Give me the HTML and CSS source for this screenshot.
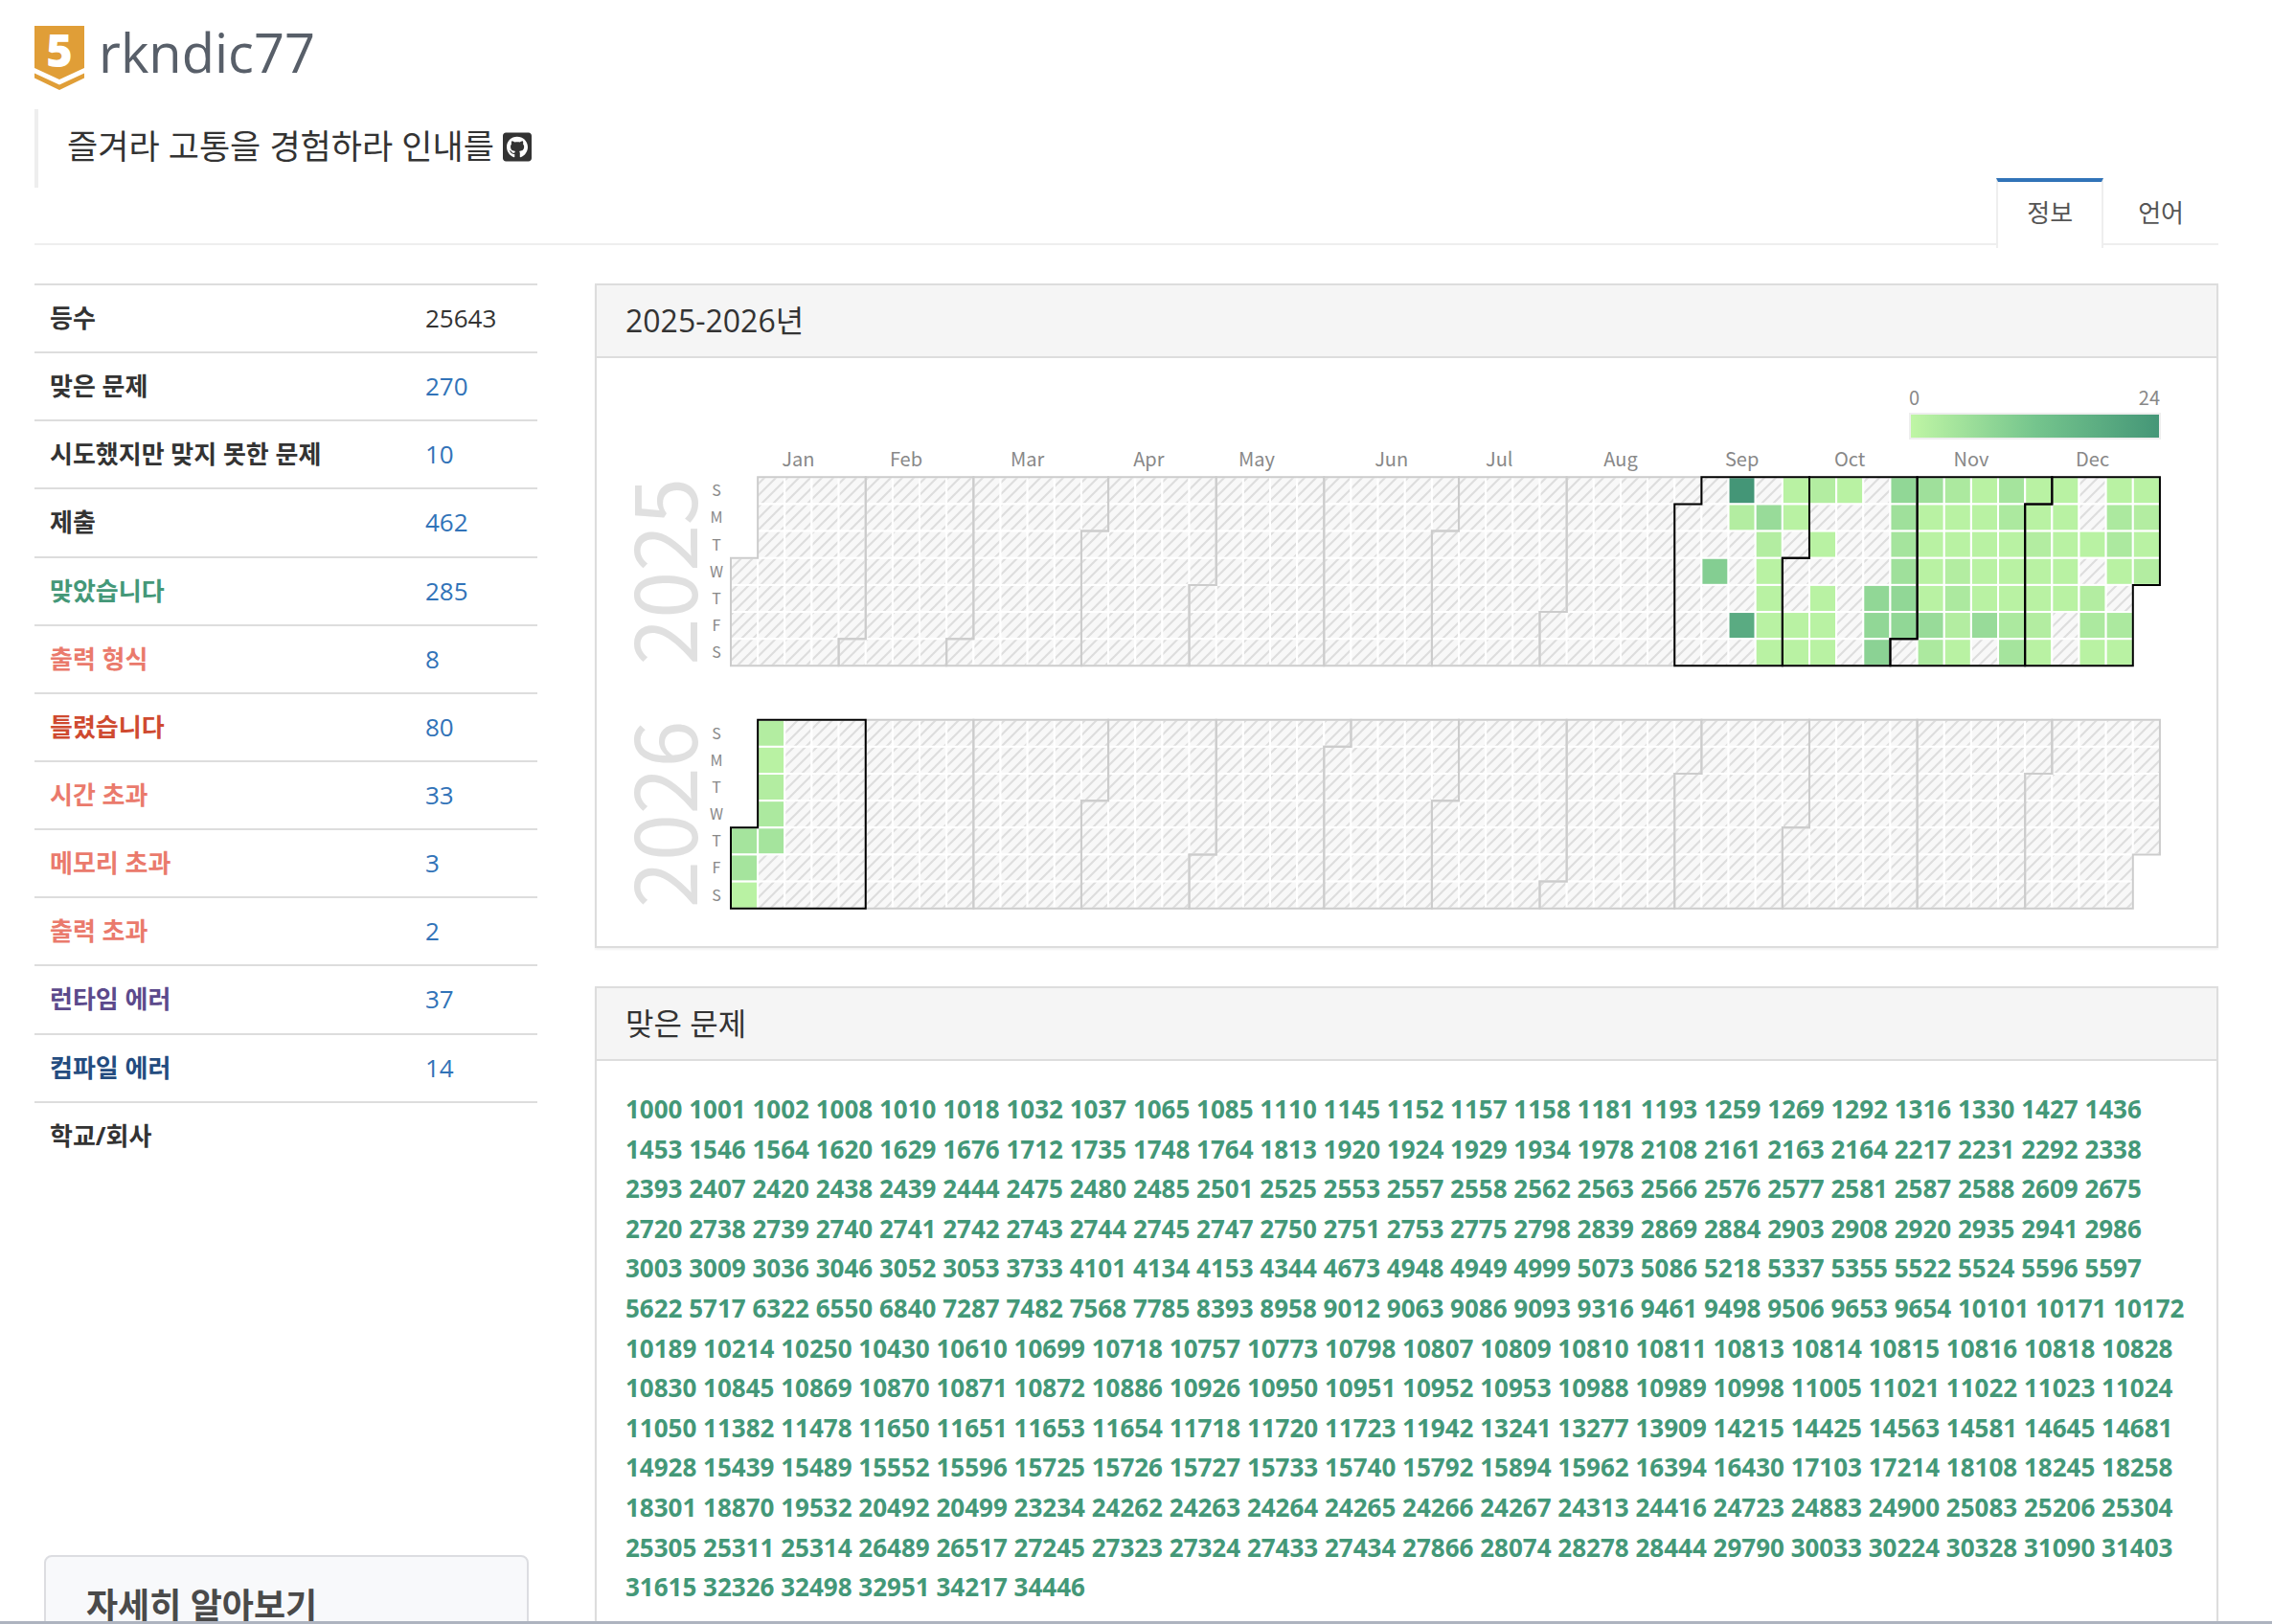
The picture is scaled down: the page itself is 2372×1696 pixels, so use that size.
FILE: index.html
```html
<!DOCTYPE html>
<html lang="ko">
<head>
<meta charset="utf-8">
<meta name="viewport" content="width=device-width, initial-scale=1">
<title>rkndic77</title>
<link rel="stylesheet" href="styles.css">
</head>
<body>
<div class="page">
  <header class="profile">
    <h1 class="profile-name">
      <svg class="tier" viewBox="0 0 52 67" role="img" aria-label="5">
        <path class="tier-shape" d="M0 0H52V44L26 56L0 44Z M0 49.500L26 61.500L52 49.500V54.500L26 67L0 54.500Z"/>
        <text class="tier-level" x="26" y="43">5</text>
      </svg>
      <span>rkndic77</span>
    </h1>
    <blockquote class="motto">
      <span>즐겨라 고통을 경험하라 인내를</span>
      <a class="github" href="#" aria-label="GitHub"><svg viewBox="0 32 448 448"><path d="M400 32H48C21.5 32 0 53.5 0 80v352c0 26.5 21.5 48 48 48h352c26.5 0 48-21.5 48-48V80c0-26.5-21.5-48-48-48zM277.3 415.7c-8.4 1.5-11.5-3.7-11.5-8 0-5.4.2-33 .2-55.3 0-15.6-5.2-25.5-11.3-30.7 37-4.1 76-9.2 76-73.1 0-18.2-6.5-27.3-17.1-39 1.7-4.3 7.4-22-1.7-45-13.9-4.3-45.7 17.9-45.7 17.9-13.2-3.7-27.5-5.6-41.6-5.6-14.1 0-28.4 1.9-41.6 5.6 0 0-31.8-22.2-45.7-17.9-9.1 22.9-3.5 40.6-1.7 45-10.6 11.7-15.6 20.8-15.6 39 0 63.6 37.3 69 74.3 73.1-4.8 4.3-9.1 11.7-10.6 22.3-9.5 4.3-33.8 11.7-48.3-13.9-9.1-15.8-25.5-17.1-25.5-17.1-16.2-.2-1.1 10.2-1.1 10.2 10.8 5 18.4 24.2 18.4 24.2 9.7 29.7 56.100 19.7 56.100 19.7 0 13.900.2 36.500.2 40.600 0 4.300-3 9.500-11.500 8-66-22.100-112.200-84.900-112.200-158.300 0-91.800 70.200-161.500 162-161.500S388 165.600 388 257.400c.1 73.400-44.700 136.300-110.700 158.300z"/></svg></a>
    </blockquote>
  </header>

  <nav class="tabs">
    <a class="tab tab-active" href="#">정보</a>
    <a class="tab" href="#">언어</a>
  </nav>

  <div class="row">
    <aside class="side">
      <table class="stats">
        <tbody>
          <tr><th scope="row">등수</th><td>25643</td></tr>
          <tr><th scope="row">맞은 문제</th><td><a href="#">270</a></td></tr>
          <tr><th scope="row">시도했지만 맞지 못한 문제</th><td><a href="#">10</a></td></tr>
          <tr><th scope="row">제출</th><td><a href="#">462</a></td></tr>
          <tr><th scope="row" class="ac">맞았습니다</th><td><a href="#">285</a></td></tr>
          <tr><th scope="row" class="limit">출력 형식</th><td><a href="#">8</a></td></tr>
          <tr><th scope="row" class="wa">틀렸습니다</th><td><a href="#">80</a></td></tr>
          <tr><th scope="row" class="limit">시간 초과</th><td><a href="#">33</a></td></tr>
          <tr><th scope="row" class="limit">메모리 초과</th><td><a href="#">3</a></td></tr>
          <tr><th scope="row" class="limit">출력 초과</th><td><a href="#">2</a></td></tr>
          <tr><th scope="row" class="rte">런타임 에러</th><td><a href="#">37</a></td></tr>
          <tr><th scope="row" class="ce">컴파일 에러</th><td><a href="#">14</a></td></tr>
          <tr><th scope="row">학교/회사</th><td></td></tr>
        </tbody>
      </table>
      <section class="promo"><h2>자세히 알아보기</h2></section>
    </aside>

    <main class="content">
      <section class="panel">
        <h3 class="panel-title">2025-2026년</h3>
        <div class="panel-body">
          <svg class="calendar" id="calendar" viewBox="0 0 1631 554">
            <defs>
              <pattern id="nodata" width="12" height="12" patternUnits="userSpaceOnUse">
                <rect class="nodata-bg" width="12" height="12"/>
                <path class="nodata-line" d="M-2 2L2 -2M-2 14L14 -2M10 14L14 10"/>
              </pattern>
              <linearGradient id="scale">
                <stop offset="0" stop-color="#c0f6a5"/>
                <stop offset="0.5" stop-color="#75c58d"/>
                <stop offset="1" stop-color="#449677"/>
              </linearGradient>
            </defs>
          </svg>
        </div>
      </section>

      <section class="panel">
        <h3 class="panel-title">맞은 문제</h3>
        <div class="panel-body problems" id="problems"></div>
      </section>
    </main>
  </div>
</div>
<div class="bottom-edge"></div>
<script src="main.js"></script>
</body>
</html>
```
FILE: styles.css
```css
* {
  box-sizing: border-box;
}

body {
  margin: 0;
  height: 100vh;
  overflow: hidden;
  background: #fff;
  color: #333;
  font-family: "Open Sans", "Noto Sans CJK KR", sans-serif;
  font-size: 26px;
  line-height: 1.6;
}

a {
  color: #3173b8;
  text-decoration: none;
}

.page {
  padding: 14px 56px 0 36px;
}

.profile-name {
  display: flex;
  align-items: center;
  gap: 15px;
  margin: 0;
  color: #585f69;
  font-size: 56px;
  font-weight: 400;
  line-height: 80px;
}

.tier {
  width: 52px;
  height: 67px;
  margin-top: 12px;
  overflow: visible;
}

.tier-shape {
  fill: #e09e37;
}

.tier-level {
  fill: #fff;
  font-size: 47px;
  font-weight: 800;
  text-anchor: middle;
}

.motto {
  display: flex;
  align-items: center;
  gap: 9px;
  margin: 20px 0 0;
  padding: 14px 30px 18px;
  border-left: 4px solid #eee;
  font-size: 35px;
  line-height: 50px;
}

.github {
  display: flex;
}

.github svg {
  width: 30px;
  height: 31px;
  fill: #333;
}

.tabs {
  display: flex;
  justify-content: flex-end;
  height: 70px;
  margin-top: -10px;
  border-bottom: 2px solid #eee;
}

.tab {
  height: 73px;
  margin-right: 4px;
  padding: 16px 32px 0;
  color: #555;
}

.tab-active {
  padding: 12px 30px 0;
  border: 2px solid #eee;
  border-top: 4px solid #3173b8;
  border-bottom: 0;
  background: #fff;
}

.row {
  display: flex;
  margin: 40px -30px 0;
}

.side {
  width: 25%;
  padding: 0 30px;
}

.content {
  width: 75%;
  padding: 0 30px;
}

.stats {
  width: 100%;
  border-collapse: separate;
  border-spacing: 0;
  table-layout: fixed;
  line-height: 1.42857;
}

.stats th,
.stats td {
  padding: 16px;
  border-top: 2px solid #ddd;
  text-align: left;
}

.stats td {
  width: 133px;
}

.ac {
  color: #449878;
}

.limit {
  color: #ea7a6c;
}

.wa {
  color: #cf4a30;
}

.rte {
  color: #5c4a8c;
}

.ce {
  color: #244c80;
}

.promo {
  margin: 403px 9px 0 10px;
  padding: 24px 42px;
  border: 2px solid #dcdde1;
  border-radius: 8px;
  background: #f8f9fb;
}

.promo h2 {
  margin: 0;
  color: #4a4a4a;
  font-size: 36px;
  line-height: 54px;
}

.panel {
  margin-bottom: 40px;
  border: 2px solid #ddd;
  box-shadow: 0 2px 2px rgba(0, 0, 0, 0.05);
}

.panel-title {
  margin: 0;
  padding: 20px 30px;
  border-bottom: 2px solid #ddd;
  background: #f5f5f5;
  font-size: 32px;
  font-weight: 400;
  line-height: 34px;
}

.panel-body {
  padding: 30px;
}

.problems a {
  color: #449878;
  font-weight: 700;
}

.calendar {
  display: block;
  width: 100%;
  overflow: visible;
  font-family: "Noto Sans CJK KR", sans-serif;
}

.nodata-bg {
  fill: #f8f8f8;
}

.nodata-line {
  stroke: #ddd;
  stroke-width: 2;
}

.day {
  stroke: #fff;
  stroke-width: 2;
}

.month-line {
  fill: none;
  stroke: #ccc;
  stroke-width: 2;
}

.month-line-active {
  stroke: #000;
}

.month-label,
.legend-label {
  fill: #888;
  font-size: 20px;
}

.weekday-label {
  fill: #888;
  font-size: 16px;
}

.month-label,
.weekday-label,
.year-label {
  text-anchor: middle;
}

.legend-label-end {
  text-anchor: end;
}

.year-label {
  fill: #e0e0e0;
  font-size: 88px;
}

.legend-bar {
  fill: url(#scale);
  stroke: #eee;
  stroke-width: 2;
}

.bottom-edge {
  position: fixed;
  right: 0;
  bottom: 0;
  left: 0;
  height: 3px;
  background: #aeb4c0;
}
```
FILE: main.js
```js
const SVG_NS = 'http://www.w3.org/2000/svg';
const svg = document.getElementById('calendar');
const LEFT = 110;
const CELL = 28.15;
const MONTHS = ['Jan', 'Feb', 'Mar', 'Apr', 'May', 'Jun', 'Jul', 'Aug', 'Sep', 'Oct', 'Nov', 'Dec'];
const MONTH_CENTERS = [2.5, 6.5, 11, 15.5, 19.5, 24.5, 28.5, 33, 37.5, 41.5, 46, 50.5];
const MAX = 24;

// Solved counts per weekday row, as [first week column, counts...].
const YEARS = [
  { year: 2025, top: 94.3, firstDay: 3, activeMonths: [8, 9, 10, 11], rows: [
    [36, 0, 24, 0, 1, 2, 1, 0, 7, 5, 3, 1, 4, 1, 1, 0, 1, 1],
    [36, 0, 2, 6, 1, 0, 0, 0, 5, 1, 1, 1, 3, 1, 1, 0, 3, 2],
    [36, 0, 0, 2, 0, 1, 0, 0, 4, 1, 1, 1, 1, 2, 1, 1, 3, 1],
    [36, 9, 0, 1, 0, 0, 0, 0, 5, 1, 2, 1, 1, 1, 1, 0, 1, 2],
    [36, 0, 0, 1, 0, 1, 0, 7, 7, 1, 3, 1, 1, 1, 1, 2, 0, 0],
    [36, 0, 18, 1, 1, 1, 0, 7, 7, 6, 2, 6, 3, 2, 0, 3, 3, 0],
    [36, 0, 0, 1, 1, 1, 0, 8, 0, 3, 1, 0, 4, 1, 0, 1, 1, 0]
  ] },
  { year: 2026, top: 347.7, firstDay: 4, activeMonths: [0], rows: [
    [1, 2], [1, 1], [1, 2], [1, 3], [0, 4, 4], [0, 4], [0, 1]
  ] }
];

function add(name, attrs, text) {
  const el = document.createElementNS(SVG_NS, name);
  for (const key in attrs) el.setAttribute(key, attrs[key]);
  if (text !== undefined) el.textContent = text;
  svg.appendChild(el);
}

function mix(count) {
  const stops = [[192, 246, 165], [112, 192, 140], [68, 150, 119]];
  const t = count / MAX * 2;
  const i = Math.min(1, Math.floor(t));
  const rgb = stops[i].map((c, k) => Math.round(c + (stops[i + 1][k] - c) * (t - i)));
  return 'rgb(' + rgb.join(',') + ')';
}

function drawYear({ year, top, firstDay, activeMonths, rows }) {
  const px = col => LEFT + col * CELL;
  const py = row => top + row * CELL;

  for (let d = firstDay; d < 365 + firstDay; d++) {
    const col = Math.floor(d / 7);
    const row = d % 7;
    const count = col >= rows[row][0] ? rows[row][col - rows[row][0] + 1] || 0 : 0;
    add('rect', { class: 'day', x: px(col), y: py(row), width: CELL, height: CELL,
      fill: count ? mix(count) : 'url(#nodata)' });
  }

  const outline = month => {
    const start = (Date.UTC(year, month, 1) - Date.UTC(year, 0, 1)) / 864e5 + firstDay;
    const end = (Date.UTC(year, month + 1, 1) - Date.UTC(year, 0, 1)) / 864e5 + firstDay;
    const c0 = Math.floor(start / 7), r0 = start % 7;
    const c1 = Math.floor(end / 7), r1 = end % 7;
    return 'M' + px(c0) + ' ' + py(r0) + 'H' + px(r0 ? c0 + 1 : c0) + 'V' + py(0) +
      'H' + px(r1 ? c1 + 1 : c1) + 'V' + py(r1) + 'H' + px(c1) + 'V' + py(7) + 'H' + px(c0) + 'Z';
  };
  MONTHS.forEach((_, m) => {
    if (!activeMonths.includes(m)) add('path', { class: 'month-line', d: outline(m) });
  });
  activeMonths.forEach(m => add('path', { class: 'month-line month-line-active', d: outline(m) }));

  [...'SMTWTFS'].forEach((day, i) =>
    add('text', { class: 'weekday-label', x: 95, y: py(i) + 20 }, day));
  add('text', { class: 'year-label', transform: 'translate(75 ' + py(3.5) + ') rotate(-90)' }, year);
}

YEARS.forEach(drawYear);
MONTHS.forEach((name, i) =>
  add('text', { class: 'month-label', x: LEFT + MONTH_CENTERS[i] * CELL, y: 83 }, name));
add('rect', { class: 'legend-bar', x: 1341, y: 28, width: 261, height: 26 });
add('text', { class: 'legend-label', x: 1340, y: 19 }, '0');
add('text', { class: 'legend-label legend-label-end', x: 1602, y: 19 }, '24');

const SOLVED = `
1000 1001 1002 1008 1010 1018 1032 1037 1065 1085 1110 1145 1152 1157 1158 1181 1193 1259 1269 1292 1316 1330 1427 1436
1453 1546 1564 1620 1629 1676 1712 1735 1748 1764 1813 1920 1924 1929 1934 1978 2108 2161 2163 2164 2217 2231 2292 2338
2393 2407 2420 2438 2439 2444 2475 2480 2485 2501 2525 2553 2557 2558 2562 2563 2566 2576 2577 2581 2587 2588 2609 2675
2720 2738 2739 2740 2741 2742 2743 2744 2745 2747 2750 2751 2753 2775 2798 2839 2869 2884 2903 2908 2920 2935 2941 2986
3003 3009 3036 3046 3052 3053 3733 4101 4134 4153 4344 4673 4948 4949 4999 5073 5086 5218 5337 5355 5522 5524 5596 5597
5622 5717 6322 6550 6840 7287 7482 7568 7785 8393 8958 9012 9063 9086 9093 9316 9461 9498 9506 9653 9654 10101 10171 10172
10189 10214 10250 10430 10610 10699 10718 10757 10773 10798 10807 10809 10810 10811 10813 10814 10815 10816 10818 10828
10830 10845 10869 10870 10871 10872 10886 10926 10950 10951 10952 10953 10988 10989 10998 11005 11021 11022 11023 11024
11050 11382 11478 11650 11651 11653 11654 11718 11720 11723 11942 13241 13277 13909 14215 14425 14563 14581 14645 14681
14928 15439 15489 15552 15596 15725 15726 15727 15733 15740 15792 15894 15962 16394 16430 17103 17214 18108 18245 18258
18301 18870 19532 20492 20499 23234 24262 24263 24264 24265 24266 24267 24313 24416 24723 24883 24900 25083 25206 25304
25305 25311 25314 26489 26517 27245 27323 27324 27433 27434 27866 28074 28278 28444 29790 30033 30224 30328 31090 31403
31615 32326 32498 32951 34217 34446`;
document.getElementById('problems').innerHTML =
  SOLVED.trim().split(/\s+/).map(id => '<a href="#' + id + '">' + id + '</a>').join(' ');
```
